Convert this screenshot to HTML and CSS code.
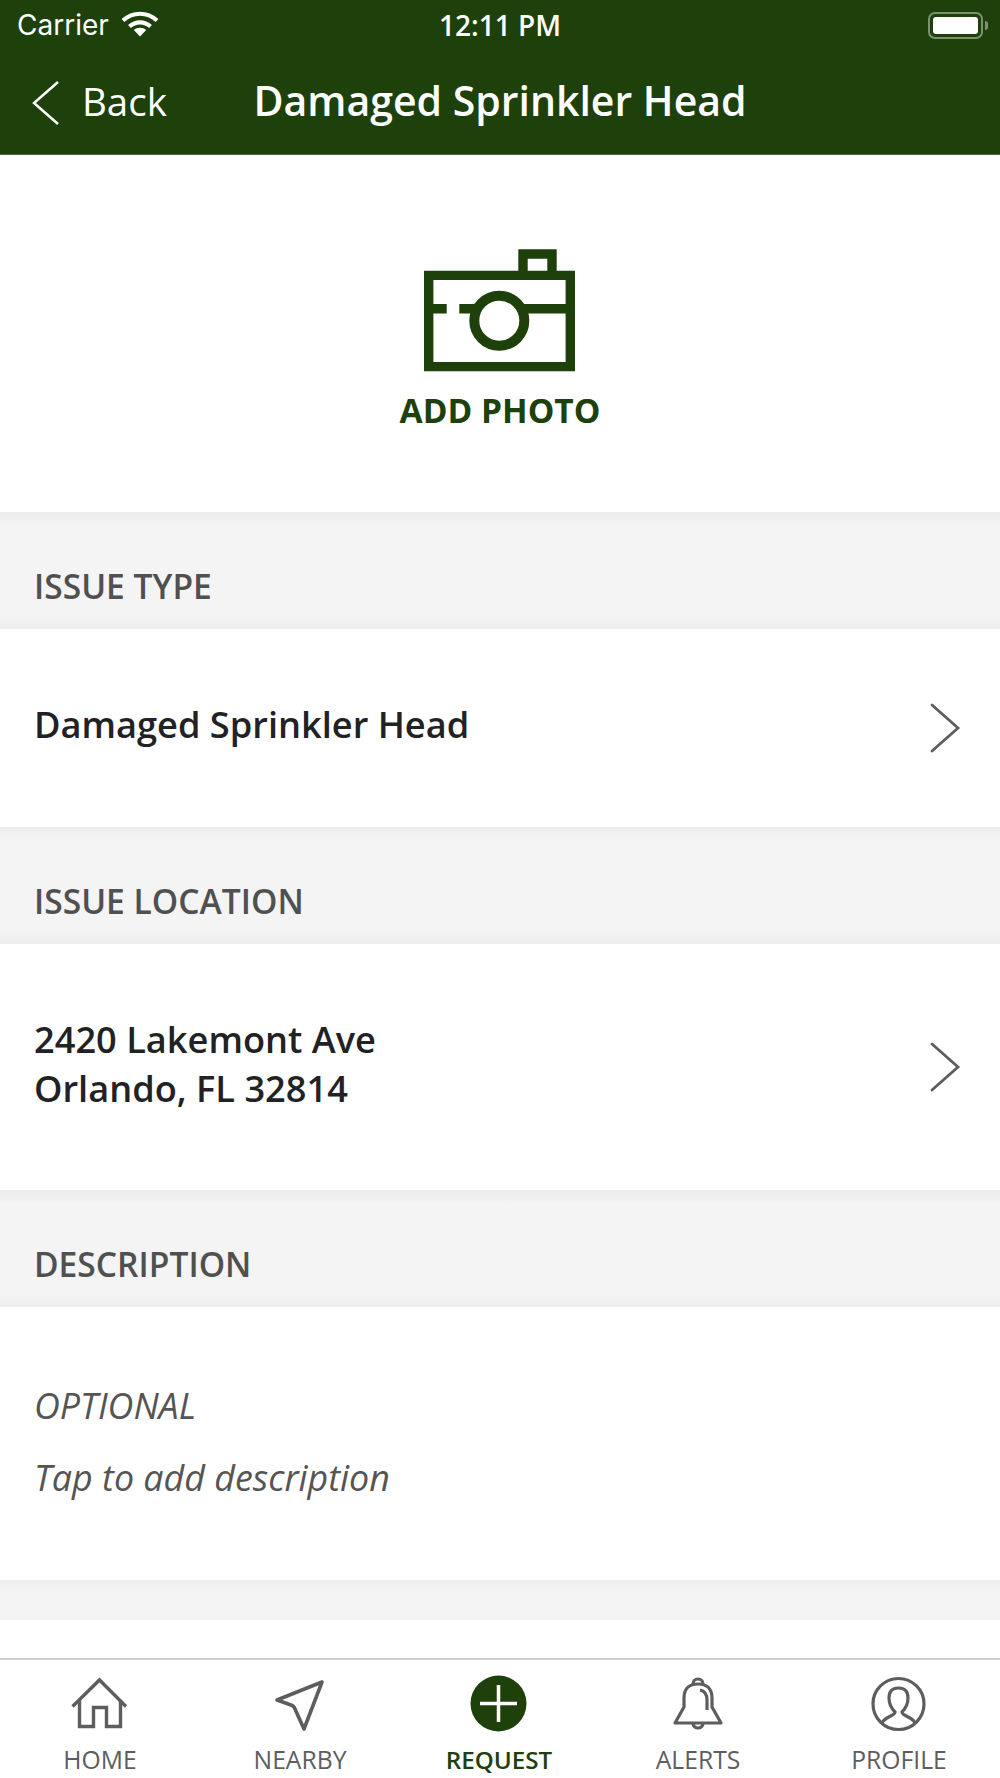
FILE: index.html
```html
<!DOCTYPE html>
<html lang="en">
<head>
<meta charset="utf-8">
<title>Damaged Sprinkler Head</title>
<link rel="stylesheet" href="styles.css">
</head>
<body>
<div class="app">
  <header class="header">
    <div class="status">
      <div class="status-left">
        <span class="carrier">Carrier</span>
        <svg class="wifi" width="38" height="28" viewBox="0 0 38 28"><path d="M19 26.500L12.800 20C16.500 17 21.500 17 25.200 20Z" fill="#fff"/><path d="M8.500 16.500C14.500 11 23.500 11 29.500 16.500" fill="none" stroke="#fff" stroke-width="4.200"/><path d="M2 10.500C12 1.500 26 1.500 36 10.500" fill="none" stroke="#fff" stroke-width="4.200"/></svg>
      </div>
      <span class="time">12:11 PM</span>
      <div class="battery"><span class="battery-fill"></span></div>
    </div>
    <nav class="nav">
      <svg class="back-icon" width="28" height="46" viewBox="0 0 28 46"><path d="M26 2L2 23L26 44" fill="none" stroke="#fff" stroke-width="2.500"/></svg>
      <span class="back">Back</span>
      <span class="title">Damaged Sprinkler Head</span>
    </nav>
  </header>
  <main class="main">
    <section class="photo">
      <svg class="camera" width="152" height="123" viewBox="0 0 152 123"><g fill="none" stroke="#1e400b" stroke-width="9.400"><path d="M4.700 26.400H146.300V117.600H4.700Z"/><path d="M99 26V5H128V26"/><path d="M4.700 59.700H22.700M35.300 59.700H56M94 59.700H147"/></g><circle cx="75.300" cy="71.700" r="25" fill="none" stroke="#1e400b" stroke-width="10"/></svg>
      <span class="photo-label">ADD PHOTO</span>
    </section>
    <h2 class="band">ISSUE TYPE</h2>
    <div class="row row-type"><span class="row-text">Damaged Sprinkler Head</span><svg class="chev" width="32" height="50" viewBox="0 0 32 50"><path d="M2 2L28 25L2 48" fill="none" stroke="#5d5d5f" stroke-width="2.800" stroke-linecap="round"/></svg></div>
    <h2 class="band">ISSUE LOCATION</h2>
    <div class="row row-loc"><span class="row-text">2420 Lakemont Ave<br>Orlando, FL 32814</span><svg class="chev" width="32" height="50" viewBox="0 0 32 50"><path d="M2 2L28 25L2 48" fill="none" stroke="#5d5d5f" stroke-width="2.800" stroke-linecap="round"/></svg></div>
    <h2 class="band">DESCRIPTION</h2>
    <div class="desc"><p class="desc-line">OPTIONAL</p><p class="desc-line">Tap to add description</p></div>
    <div class="spacer"></div>
  </main>
  <footer class="tabs">
    <div class="tab">
      <svg class="tab-icon" width="60" height="56" viewBox="0 0 60 56"><g fill="none" stroke="#5d5d60" stroke-width="3.400"><path d="M2.500 29.500L29.500 3L56 29.500"/><path d="M9.500 23V49.500H23.500V30.500H36.500V49.500H50.500V23"/></g></svg>
      <span class="tab-label">HOME</span>
    </div>
    <div class="tab">
      <svg class="tab-icon" width="60" height="56" viewBox="0 0 60 56"><path d="M7 23L52 5L34 52L25 32Q24 29 21 28Z" fill="none" stroke="#5d5d60" stroke-width="3.600" stroke-linejoin="round"/></svg>
      <span class="tab-label">NEARBY</span>
    </div>
    <div class="tab tab-active">
      <svg class="tab-icon" width="60" height="56" viewBox="0 0 60 56"><circle cx="29.500" cy="26.500" r="28" fill="#1e400b"/><path d="M29.500 8V45M11 26.500H48" stroke="#fff" stroke-width="3.500"/></svg>
      <span class="tab-label">REQUEST</span>
    </div>
    <div class="tab">
      <svg class="tab-icon" width="60" height="56" viewBox="0 0 60 56"><g fill="none" stroke="#5d5d60" stroke-width="3.200"><path d="M7 46H53L44 30V21C44 11 38 7 30 7C22 7 16 11 16 21V30Z" stroke-linejoin="round"/><path d="M25 7A5 5 0 1 1 35 7"/><path d="M25 46A5 5 0 0 0 35 46"/><path d="M32 13C37 14 39 18 39 23V33"/></g></svg>
      <span class="tab-label">ALERTS</span>
    </div>
    <div class="tab">
      <svg class="tab-icon" width="60" height="56" viewBox="0 0 60 56"><g fill="none" stroke="#5d5d60" stroke-width="3.200"><circle cx="29.500" cy="27" r="25.500"/><path d="M13 46C15 40 26 39 26 35C22 31 20 26 20 21C20 14 24 11 29.500 11C35 11 39 14 39 21C39 26 37 31 33 35C33 39 44 40 46 46"/></g></svg>
      <span class="tab-label">PROFILE</span>
    </div>
  </footer>
</div>
</body>
</html>
```
FILE: styles.css
```css
* { box-sizing: border-box; }
html, body { margin: 0; padding: 0; }
body { background: #fff; font-family: "Open Sans", "Liberation Sans", sans-serif; }
.app { width: 1000px; height: 1778px; display: flex; flex-direction: column; overflow: hidden; }
.header { height: 155px; background: #1e400b; border-bottom: 1px solid #4a6a38; color: #fff; flex: none; }
.status { height: 50px; display: flex; align-items: center; justify-content: space-between; position: relative; padding: 0 17px 0 17px; }
.status-left { display: flex; align-items: center; gap: 12px; }
.carrier { font-size: 28px; font-family: "Inter", "Open Sans", sans-serif; color: #fff; }
.wifi { display: block; margin-top: -3px; }
.time { position: absolute; left: 0; right: 0; text-align: center; font-size: 28px; font-weight: 600; }
.battery { width: 55px; height: 27px; border: 2px solid #7b9270; border-radius: 7px; padding: 3px; position: relative; }
.battery::after { content: ""; position: absolute; right: -7px; top: 7px; width: 3px; height: 9px; background: #7b9270; border-radius: 0 3px 3px 0; }
.battery-fill { display: block; height: 100%; background: #fff; border-radius: 3px; }
.nav { height: 104px; display: flex; align-items: center; position: relative; padding-left: 32px; }
.back-icon { display: block; margin-top: 2px; }
.back { font-size: 38.500px; font-weight: 400; margin-left: 22px; margin-top: -3px; }
.title { position: absolute; left: 0; right: 0; text-align: center; font-size: 41px; font-weight: 600; margin-top: -5px; }
.main { flex: 1; min-height: 0; }
.photo { height: 357px; display: flex; flex-direction: column; align-items: center; padding-top: 94px; }
.camera { display: block; }
.photo-label { font-size: 33.500px; font-weight: 700; color: #1e400b; margin-top: 15px; line-height: 46px; }
.band { margin: 0; height: 117px; padding: 0 0 21px 34px; display: flex; align-items: flex-end; background: linear-gradient(#ececec, #f4f4f4 14px, #f4f4f4 calc(100% - 14px), #ededed); font-size: 33.600px; font-weight: 600; color: #505050; line-height: 44px; }
.row { display: flex; align-items: center; justify-content: space-between; padding: 0 38px 0 34px; background: #fff; }
.row-type { height: 198px; }
.row-loc { height: 246px; }
.row-text { font-size: 36.200px; font-weight: 600; color: #222224; line-height: 49px; padding-bottom: 7px; }
.chev { display: block; flex: none; }
.desc { height: 273px; padding: 74px 34px 0; }
.desc-line { margin: 0 0 24px; font-size: 35.800px; font-style: italic; color: #555; line-height: 48px; }
.spacer { height: 40px; background: linear-gradient(#ededed, #f4f4f4 12px); }
.tabs { height: 120px; flex: none; border-top: 2px solid #cdcdcd; display: grid; grid-template-columns: 200px 200px 198px 200px 202px; background: #fff; padding-top: 17px; }
.tab { display: flex; flex-direction: column; align-items: center; }
.tab-icon { display: block; overflow: visible; }
.tab-label { font-size: 24.700px; font-weight: 500; color: #5d5d60; line-height: 33px; margin-top: 10px; }
.tab-active .tab-label { color: #1e400b; font-weight: 600; font-size: 24.200px; }
```
